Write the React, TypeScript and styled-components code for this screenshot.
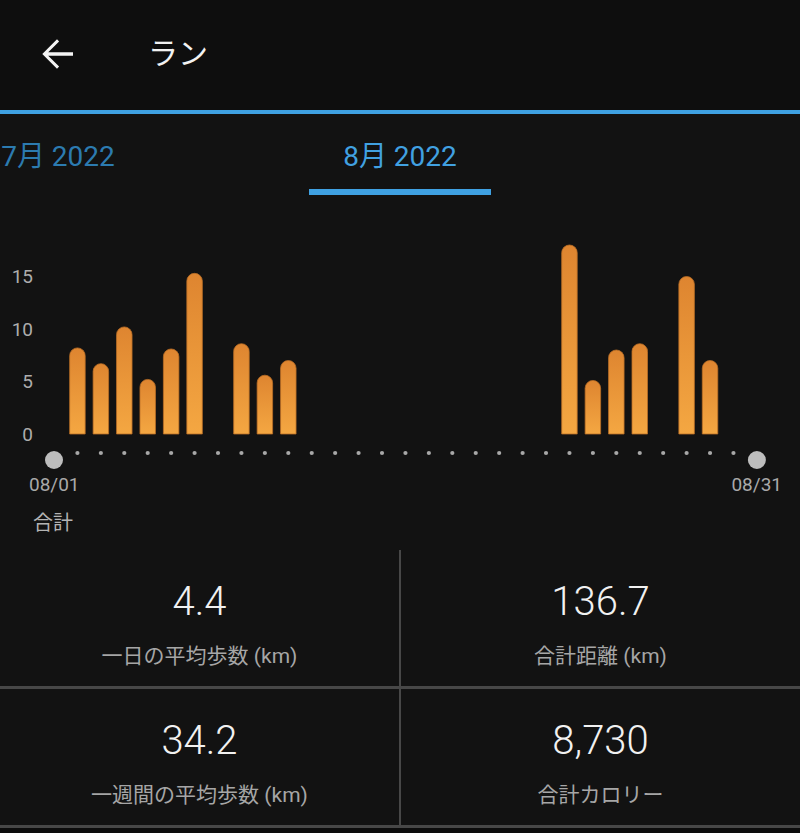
import React from "react";
import styled, { createGlobalStyle } from "styled-components";

const GlobalStyle = createGlobalStyle`
  html, body {
    margin: 0;
    padding: 0;
    background: #0c0c0c;
  }
  body {
    font-family: Roboto, "Noto Sans CJK JP", sans-serif;
    -webkit-font-smoothing: antialiased;
  }
`;

const ACCENT = "#3fa1e2";

const Page = styled.div`
  width: 800px;
  background: #121212;
  color: #eee;
  overflow: hidden;
`;

const Header = styled.header`
  height: 114px;
  box-sizing: border-box;
  padding: 0 0 3px 33px;
  display: flex;
  align-items: center;
  background: #0e0e0e;
  border-bottom: 4px solid ${ACCENT};
`;

const BackButton = styled.button`
  width: 48px;
  height: 48px;
  padding: 0;
  border: 0;
  background: none;
  color: #f4f4f4;
  display: flex;
  align-items: center;
  justify-content: center;
`;

const Title = styled.h1`
  margin: 0 0 0 67px;
  font-size: 30px;
  font-weight: 400;
  line-height: 36px;
  color: #f2f2f2;
`;

const TabStrip = styled.nav`
  height: 81px;
  overflow: hidden;
`;

const TabTrack = styled.div`
  display: flex;
  transform: translateX(-113px);
`;

const Tab = styled.div<{ $active?: boolean }>`
  width: 342px;
  flex-shrink: 0;
  padding-top: 27px;
  display: flex;
  flex-direction: column;
  align-items: center;
  font-size: 28px;
  line-height: 32px;
  color: ${(p) => (p.$active ? "#41a1e1" : "#2c7bb0")};
`;

const Indicator = styled.div<{ $active?: boolean }>`
  margin-top: 16px;
  width: 182px;
  height: 6px;
  background: ${(p) => (p.$active ? ACCENT : "transparent")};
`;

const Chart = styled.svg`
  display: block;
  width: 800px;
  height: 279px;
`;

const DateRow = styled.div`
  display: flex;
  justify-content: space-between;
  padding: 0 18px 0 29px;
  font-size: 19px;
  line-height: 22px;
  color: #a9a9a9;
`;

const SectionLabel = styled.div`
  margin: 15px 0 15px 33px;
  font-size: 20px;
  line-height: 24px;
  color: #b4b4b4;
`;

const StatGrid = styled.div`
  display: grid;
  grid-template-columns: 401px 1fr;
`;

const StatCell = styled.div<{ $left?: boolean }>`
  height: 139px;
  box-sizing: border-box;
  padding-top: 28px;
  display: flex;
  flex-direction: column;
  align-items: center;
  border-bottom: 3px solid #474747;
  border-right: ${(p) => (p.$left ? "2px solid #474747" : "0")};
`;

const StatValue = styled.div`
  font-size: 40px;
  font-weight: 300;
  line-height: 48px;
  color: #f1f1f1;
`;

const StatLabel = styled.div`
  margin-top: 16px;
  font-size: 21px;
  line-height: 28px;
  color: #a6a6a6;
`;

// km per day, keyed by slot on the axis
const runs: Record<number, number> = {
  1: 8.2, 2: 6.7, 3: 10.2, 4: 5.2, 5: 8.1, 6: 15.3,
  8: 8.6, 9: 5.6, 10: 7.0,
  22: 18.0, 23: 5.1, 24: 8.0, 25: 8.6, 27: 15.0, 28: 7.0,
};

const SLOT0 = 54;
const STEP = 23.43;
const BASE = 434;
const PX_PER_KM = 10.5;
const BAR_W = 15.5;

function barPath(cx: number, v: number) {
  const r = BAR_W / 2;
  const top = BASE - v * PX_PER_KM;
  const l = cx - r;
  const rr = cx + r;
  return `M${l} ${BASE} V${top + r} A${r} ${r} 0 0 1 ${rr} ${top + r} V${BASE} Z`;
}

function RunChart() {
  const slots = Array.from({ length: 31 }, (_, i) => i);
  return (
    <Chart viewBox="0 195 800 279">
      <defs>
        <linearGradient id="bar" x1="0" y1="0" x2="0" y2="1">
          <stop offset="0" stopColor="#de8530" />
          <stop offset="1" stopColor="#f4a742" />
        </linearGradient>
      </defs>
      {[0, 5, 10, 15].map((v) => (
        <text
          key={v}
          x={33}
          y={440.5 - v * PX_PER_KM}
          textAnchor="end"
          fontSize={19}
          fontFamily="Roboto, sans-serif"
          fill="#adadad"
        >
          {v}
        </text>
      ))}
      {Object.entries(runs).map(([slot, v]) => (
        <path
          key={slot}
          d={barPath(SLOT0 + Number(slot) * STEP, v)}
          fill="url(#bar)"
          stroke="#b96d26"
          strokeWidth={0.8}
        />
      ))}
      {slots.map((i) =>
        i === 0 || i === 30 ? (
          <circle key={i} cx={SLOT0 + i * STEP} cy={460} r={9} fill="#bdbdbd" />
        ) : (
          <circle key={i} cx={SLOT0 + i * STEP} cy={453} r={2.1} fill="#a8a8a8" />
        )
      )}
    </Chart>
  );
}

const stats = [
  { value: "4.4", label: "一日の平均歩数 (km)" },
  { value: "136.7", label: "合計距離 (km)" },
  { value: "34.2", label: "一週間の平均歩数 (km)" },
  { value: "8,730", label: "合計カロリー" },
];

export default function App() {
  return (
    <Page>
      <GlobalStyle />
      <Header>
        <BackButton aria-label="戻る">
          <svg width="48" height="48" viewBox="0 0 24 24" fill="currentColor">
            <path d="M20 11.15H7.6l5.45-5.45L12 4.65 4.65 12 12 19.35l1.05-1.05-5.45-5.45H20z" />
          </svg>
        </BackButton>
        <Title>ラン</Title>
      </Header>
      <TabStrip>
        <TabTrack>
          <Tab>
            7月 2022
            <Indicator />
          </Tab>
          <Tab $active>
            8月 2022
            <Indicator $active />
          </Tab>
        </TabTrack>
      </TabStrip>
      <RunChart />
      <DateRow>
        <span>08/01</span>
        <span>08/31</span>
      </DateRow>
      <SectionLabel>合計</SectionLabel>
      <StatGrid>
        {stats.map((s, i) => (
          <StatCell key={s.label} $left={i % 2 === 0}>
            <StatValue>{s.value}</StatValue>
            <StatLabel>{s.label}</StatLabel>
          </StatCell>
        ))}
      </StatGrid>
    </Page>
  );
}
